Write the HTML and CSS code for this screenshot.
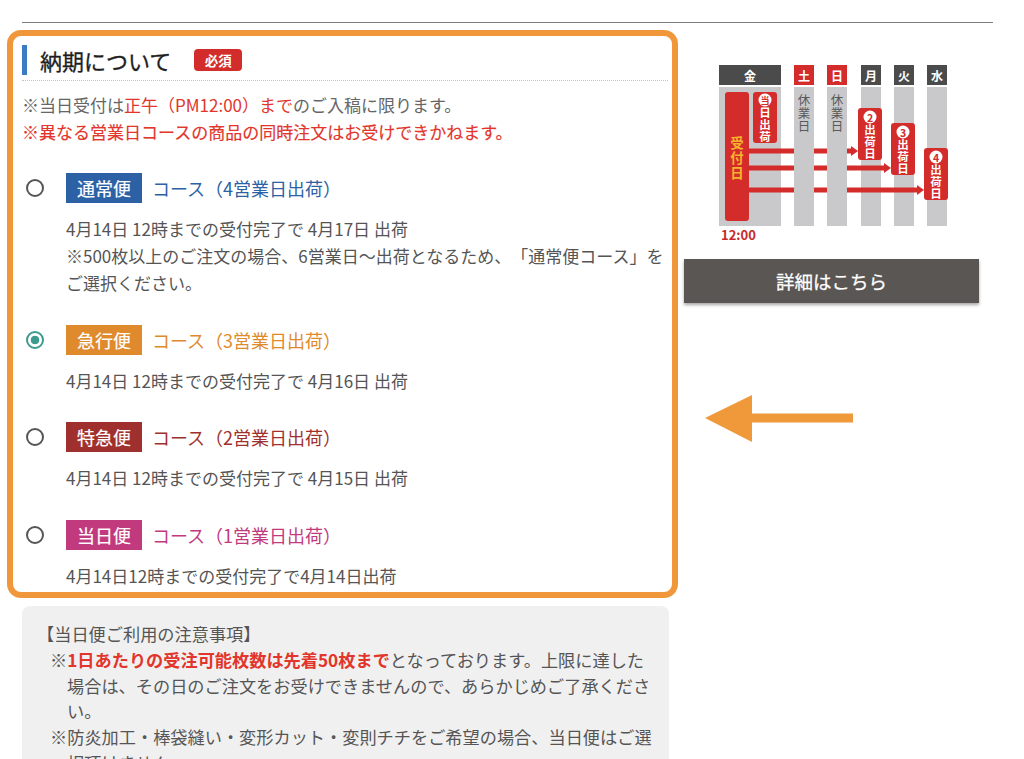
FILE: index.html
```html
<!DOCTYPE html>
<html lang="ja">
<head>
<meta charset="utf-8">
<title>納期について</title>
<link rel="stylesheet" href="styles.css">
</head>
<body>
<div class="page">
  <div class="topline"></div>
  <div class="main">
    <div class="left">
      <section class="box">
        <div class="title-wrap">
          <h2 class="title"><span class="title-text">納期について</span><span class="badge">必須</span></h2>
        </div>
        <p class="note">※当日受付は<span class="red">正午（PM12:00）まで</span>のご入稿に限ります。<br><span class="red medium">※異なる営業日コースの商品の同時注文はお受けできかねます。</span></p>

        <div class="option">
          <div class="opt-row"><span class="radio"></span><span class="tag tag-blue">通常便</span><span class="course c-blue">コース（4営業日出荷）</span></div>
          <p class="desc">4月14日 12時までの受付完了で 4月17日 出荷<br>※500枚以上のご注文の場合、6営業日～出荷となるため、「通常便コース」を<br>ご選択ください。</p>
        </div>

        <div class="option">
          <div class="opt-row"><span class="radio checked"></span><span class="tag tag-orange">急行便</span><span class="course c-orange">コース（3営業日出荷）</span></div>
          <p class="desc">4月14日 12時までの受付完了で 4月16日 出荷</p>
        </div>

        <div class="option">
          <div class="opt-row"><span class="radio"></span><span class="tag tag-dred">特急便</span><span class="course c-dred">コース（2営業日出荷）</span></div>
          <p class="desc">4月14日 12時までの受付完了で 4月15日 出荷</p>
        </div>

        <div class="option">
          <div class="opt-row"><span class="radio"></span><span class="tag tag-mag">当日便</span><span class="course c-mag">コース（1営業日出荷）</span></div>
          <p class="desc">4月14日12時までの受付完了で4月14日出荷</p>
        </div>
      </section>

      <section class="notice">
        <p class="nt-title">【当日便ご利用の注意事項】</p>
        <ul class="nt-list">
          <li>※<span class="red bold">1日あたりの受注可能枚数は先着50枚まで</span>となっております。上限に達した場合は、その日のご注文をお受けできませんので、あらかじめご了承ください。</li>
          <li>※防炎加工・棒袋縫い・変形カット・変則チチをご希望の場合、当日便はご選択頂けません。</li>
        </ul>
      </section>
    </div>

    <aside class="right">
      <svg class="diagram" width="232" height="185" viewBox="719 60 232 185" xmlns="http://www.w3.org/2000/svg">
        <g>
          <rect x="719" y="65" width="62" height="20" fill="#4b4b4b"/>
          <rect x="794" y="65" width="20" height="20" fill="#d42b2b"/>
          <rect x="827" y="65" width="20" height="20" fill="#d42b2b"/>
          <rect x="861" y="65" width="20" height="20" fill="#4b4b4b"/>
          <rect x="894" y="65" width="20" height="20" fill="#4b4b4b"/>
          <rect x="927" y="65" width="20" height="20" fill="#4b4b4b"/>
        </g>
        <g fill="#fff" font-size="12" font-weight="700" text-anchor="middle" dominant-baseline="central" font-family="Noto Sans CJK JP, sans-serif">
          <text x="750" y="75">金</text>
          <text x="804" y="75">土</text>
          <text x="837" y="75">日</text>
          <text x="871" y="75">月</text>
          <text x="904" y="75">火</text>
          <text x="937" y="75">水</text>
        </g>
        <g fill="#c9c9cb">
          <rect x="719" y="87" width="62" height="139"/>
          <rect x="794" y="87" width="20" height="139"/>
          <rect x="827" y="87" width="20" height="139"/>
          <rect x="861" y="87" width="20" height="139"/>
          <rect x="894" y="87" width="20" height="139"/>
          <rect x="927" y="87" width="20" height="139"/>
        </g>
        <g fill="#5a5a5a" font-size="12.5" font-family="Noto Sans CJK JP, sans-serif" class="vt">
          <text x="804" y="93.5" letter-spacing="0.5">休業日</text>
          <text x="837" y="93.5" letter-spacing="0.5">休業日</text>
        </g>
        <g fill="#d42b2b">
          <rect x="725" y="92" width="24" height="129" rx="3"/>
          <rect x="753" y="92" width="24" height="51" rx="3"/>
          <rect x="858" y="108" width="24" height="52" rx="3"/>
          <rect x="891" y="123" width="24" height="52" rx="3"/>
          <rect x="924" y="148" width="24" height="52" rx="3"/>
          <rect x="749" y="148.5" width="45" height="5"/>
          <rect x="814" y="148.5" width="13" height="5"/>
          <rect x="847" y="148.5" width="4" height="5"/>
          <polygon points="851,146 858,151 851,156"/>
          <rect x="749" y="165.5" width="45" height="5"/>
          <rect x="814" y="165.5" width="13" height="5"/>
          <rect x="847" y="165.5" width="37" height="5"/>
          <polygon points="884,163 891,168 884,173"/>
          <rect x="749" y="187.5" width="45" height="5"/>
          <rect x="814" y="187.5" width="13" height="5"/>
          <rect x="847" y="187.5" width="70" height="5"/>
          <polygon points="917,185 924,190 917,195"/>
        </g>
        <text x="737" y="136" fill="#f6b42c" font-size="13.5" font-weight="700" letter-spacing="1.5" font-family="Noto Sans CJK JP, sans-serif" class="vt">受付日</text>
        <g fill="#fff">
          <circle cx="765" cy="100" r="6.5"/>
          <circle cx="870" cy="117" r="6.5"/>
          <circle cx="903" cy="132" r="6.5"/>
          <circle cx="936" cy="157" r="6.5"/>
        </g>
        <g fill="#d42b2b" font-size="9" font-weight="700" text-anchor="middle" dominant-baseline="central" font-family="Noto Sans CJK JP, sans-serif">
          <text x="765" y="100">当</text>
          <text x="870" y="117" font-size="10.5">2</text>
          <text x="903" y="132" font-size="10.5">3</text>
          <text x="936" y="157" font-size="10.5">4</text>
        </g>
        <g fill="#fff" font-size="11.5" font-weight="700" letter-spacing="0.5" font-family="Noto Sans CJK JP, sans-serif" class="vt">
          <text x="765" y="107">日出荷</text>
          <text x="870" y="124">出荷日</text>
          <text x="903" y="139">出荷日</text>
          <text x="936" y="164">出荷日</text>
        </g>
        <text x="721" y="240" fill="#c9282a" font-size="13" font-weight="700" font-family="Noto Sans CJK JP, sans-serif">12:00</text>
      </svg>
      <a class="detail-btn" href="#">詳細はこちら</a>
      <svg class="arrow" width="160" height="60" viewBox="700 390 160 60" xmlns="http://www.w3.org/2000/svg">
        <polygon points="705,418 752,395 752,413.5 853,413.5 853,422.5 752,422.5 752,442" fill="#f0993a"/>
      </svg>
    </aside>
  </div>
</div>
</body>
</html>
```
FILE: styles.css
```css
* { box-sizing: border-box; }
html, body { margin: 0; padding: 0; background: #fff; }
body {
  font-family: "Noto Sans CJK JP", "Noto Sans", sans-serif;
  color: #555;
  width: 1024px;
  text-spacing-trim: space-all;
}
.page { padding-top: 22px; }
.topline {
  margin: 0 31px 0 22px;
  border-top: 1px solid #7d7d7d;
}
.main {
  display: flex;
  gap: 6px;
  margin-top: 7px;
  padding-left: 7px;
}
.left { width: 671px; }
.box {
  border: 6px solid #f1973b;
  border-radius: 14px;
  padding: 9px 4px 3.5px 9px;
}
.title-wrap {
  padding-bottom: 5px;
  border-bottom: 1px dotted #c4c4c4;
}
.title {
  margin: 0;
  display: flex;
  align-items: center;
  height: 30px;
  border-left: 5px solid #3b7cc4;
  padding-left: 13px;
  font-size: 22px;
  font-weight: 400;
  color: #1e1e1e;
}
.title-text { -webkit-text-stroke: 0.3px #1e1e1e; }
.badge {
  display: inline-flex;
  align-items: center;
  justify-content: center;
  width: 48px;
  height: 22px;
  margin-left: 23px;
  background: #d22d2a;
  color: #fff;
  border-radius: 4px;
  font-size: 13.5px;
  font-weight: 700;
}
.note {
  margin: 9.5px 0 0;
  font-size: 17px;
  line-height: 27px;
  color: #666;
}
.red { color: #e2352b; }
.medium { -webkit-text-stroke: 0.15px #e2352b; }
.bold { font-weight: 700; }
.option { margin-top: 28.5px; }
.opt-row {
  display: flex;
  align-items: center;
  height: 30px;
}
.radio {
  width: 18px;
  height: 18px;
  border: 2.5px solid #555;
  border-radius: 50%;
  margin-left: 4px;
  margin-right: 22px;
  flex: none;
  background: #fff;
}
.radio.checked {
  border-color: #3c9b8c;
  background: radial-gradient(circle, #3c9b8c 0 4px, #fff 4.6px);
}
.tag {
  display: inline-flex;
  align-items: center;
  justify-content: center;
  height: 30px;
  width: 76px;
  color: #fff;
  font-size: 18px;
  font-weight: 400;
  -webkit-text-stroke: 0.2px #fff;
}
.tag-blue { background: #2c62a5; }
.tag-orange { background: #df8a2d; }
.tag-dred { background: #a0302d; }
.tag-mag { background: #c23a7e; }
.course {
  margin-left: 10px;
  font-size: 18px;
  font-weight: 400;
}
.c-blue { color: #2c62a5; }
.c-orange { color: #df8a2d; }
.c-dred { color: #a0302d; }
.c-mag { color: #c23a7e; }
.desc {
  margin: 12px 0 0 44px;
  font-size: 17px;
  line-height: 27px;
  color: #555;
}
.notice {
  margin: 8px 9px 0 15px;
  background: #f0f0f0;
  border-radius: 8px;
  padding: 15px 14px 20px 15px;
  font-size: 17.2px;
  line-height: 25.8px;
  color: #555;
}
.nt-title { margin: 0; }
.nt-list {
  list-style: none;
  margin: 0 0 0 13px;
  padding: 0;
}
.nt-list li {
  padding-left: 17px;
  text-indent: -17px;
}
.right {
  width: 295px;
  flex: none;
}
.diagram {
  display: block;
  margin: 30px 0 0 35px;
}
.vt {
  writing-mode: vertical-rl;
  text-orientation: upright;
}
.detail-btn {
  display: flex;
  align-items: center;
  justify-content: center;
  height: 44px;
  margin-top: 14px;
  background: #5a5654;
  color: #fff;
  text-decoration: none;
  font-size: 18.5px;
  font-weight: 400;
  -webkit-text-stroke: 0.25px #fff;
  box-shadow: 0 2px 3px rgba(0, 0, 0, 0.35);
}
.arrow {
  display: block;
  margin: 87px 0 0 16px;
}
```
